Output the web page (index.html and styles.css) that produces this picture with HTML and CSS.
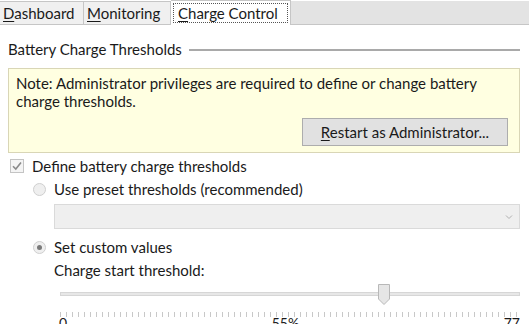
FILE: index.html
```html
<html lang="en">
    <head>
        <meta charset="UTF-8">
        <title>Charge Control</title>
        <link rel="stylesheet" href="styles.css">
    </head>
    <body>
        <div class="tabs">
            <div class="tab"><u>D</u>ashboard</div>
            <div class="tab"><u>M</u>onitoring</div>
            <div class="tab active"><span class="focus"><u>C</u>harge Control</span></div>
            <div class="tab-rest"></div>
        </div>
        <div id="page">
            <div class="group-title">
                <span>Battery Charge Thresholds</span>
                <div class="rule"></div>
            </div>
            <div class="note">
                <p>Note: Administrator privileges are required to define or change battery charge thresholds.</p>
                <div class="note-actions">
                    <button type="button"><u>R</u>estart as Administrator...</button>
                </div>
            </div>
            <div class="row">
                <svg class="check" width="14" height="14" viewBox="0 0 14 14">
                    <rect x="0.5" y="0.5" width="13" height="13" fill="#f4f4f4" stroke="#c4c4c4"/>
                    <path d="M3 7.2 L5.8 10 L11 3.6" fill="none" stroke="#8a8a8a" stroke-width="1.6"/>
                </svg>
                <span>Define battery charge thresholds</span>
            </div>
            <div class="indent">
                <div class="row">
                    <span class="radio"></span>
                    <span>Use preset thresholds (recommended)</span>
                </div>
                <div class="combo">
                    <svg width="8" height="6" viewBox="0 0 8 6"><path d="M1 1.5 L4 4.5 L7 1.5" fill="none" stroke="#b0b0b0" stroke-width="1"/></svg>
                </div>
                <div class="row">
                    <span class="radio on"></span>
                    <span>Set custom values</span>
                </div>
                <div class="sub">
                    <div class="label">Charge start threshold:</div>
                    <div class="slider">
                        <div class="track"></div>
                        <svg class="thumb" width="12" height="21" viewBox="0 0 12 21">
                            <path d="M0.5 0.5 H11.5 V15 L6 20.5 L0.5 15 Z" fill="#e6e6e6" stroke="#b8b8b8"/>
                        </svg>
                    </div>
                    <div class="ticks"></div>
                    <div class="scale">
                        <span>0</span>
                        <span>55%</span>
                        <span>77</span>
                    </div>
                </div>
            </div>
        </div>
    </body>
</html>
```

FILE: styles.css
```css
* {
    margin: 0;
    padding: 0;
    box-sizing: border-box;
}

body {
    width: 529px;
    height: 324px;
    overflow: hidden;
    background: #fff;
    color: #1a1a1a;
    font-family: Lato, "Noto Sans", sans-serif;
    font-size: 15px;
}

u {
    text-decoration: underline;
    text-underline-offset: 2px;
}

.tabs {
    display: flex;
    height: 25px;
}
.tab {
    height: 24px;
    line-height: 22px;
    padding: 0 3px;
    background: #f0f0f0;
    border: 1px solid #c6c6c6;
    border-left: 0;
    margin-top: 1px;
    font-size: 15px;
}
.tab:first-child {
    border-left: 0;
    width: 84px;
}
.tab:nth-child(2) {
    width: 87px;
}
.tab.active {
    background: #fff;
    border-bottom: 0;
    margin-top: 0;
    height: 25px;
    width: 120px;
    padding: 2px 2px 0;
}
.focus {
    display: block;
    height: 20px;
    line-height: 18px;
    padding: 0 4px;
    border: 1px dotted #555;
}
.tab-rest {
    flex: 1;
    height: 24px;
    margin-top: 1px;
    background: #e3e3e3;
    border-bottom: 1px solid #c6c6c6;
}

#page {
    padding: 14px 9px 0 8px;
}

.group-title {
    display: flex;
    align-items: center;
    gap: 7px;
    height: 20px;
}
.rule {
    flex: 1;
    height: 2px;
    background: #a9a9a9;
    margin-top: 1px;
}

.note {
    margin-top: 9px;
    background: #ffffe1;
    border: 1px solid #d9d6b6;
    padding: 5px 7px 7px 7px;
    height: 85px;
}
.note p {
    line-height: 18px;
}
.note-actions {
    display: flex;
    justify-content: flex-end;
    margin-top: 8px;
    padding-right: 4px;
}
button {
    width: 206px;
    height: 28px;
    background: #e1e1e1;
    border: 1px solid #adadad;
    font-family: inherit;
    font-size: 15px;
    color: #1a1a1a;
}

.row {
    display: flex;
    align-items: center;
    gap: 8px;
    height: 22px;
}
.note + .row {
    margin-top: 2px;
    padding-left: 2px;
}
.check {
    display: block;
}

.indent {
    padding-left: 25px;
    margin-top: 1px;
}
.radio {
    width: 13px;
    height: 13px;
    border-radius: 50%;
    background: #efefef;
    border: 1px solid #cfcfcf;
    display: flex;
    align-items: center;
    justify-content: center;
}
.radio.on::after {
    content: "";
    width: 5px;
    height: 5px;
    border-radius: 50%;
    background: #7a7a7a;
}

.combo {
    margin: 4px 0 7px 21px;
    height: 25px;
    background: #efefef;
    border: 1px solid #dadada;
    display: flex;
    align-items: center;
    justify-content: flex-end;
    padding-right: 6px;
}

.sub {
    padding-left: 21px;
}
.label {
    height: 22px;
    line-height: 22px;
    margin-top: 1px;
}
.slider {
    position: relative;
    height: 22px;
    margin-top: 2px;
    display: flex;
    align-items: center;
    padding-left: 6px;
}
.track {
    flex: 1;
    height: 4px;
    background: #e7e7e7;
    border: 1px solid #d6d6d6;
}
.thumb {
    position: absolute;
    left: 324px;
    top: 1px;
}
.ticks {
    height: 5px;
    margin: 7px 0 0 6px;
    background: repeating-linear-gradient(to right, #c8c8c8 0 1px, transparent 1px 6px);
}
.scale {
    display: flex;
    justify-content: space-between;
    padding-left: 5px;
    font-size: 14px;
    line-height: 10px;
    margin-top: 1px;
}
```
